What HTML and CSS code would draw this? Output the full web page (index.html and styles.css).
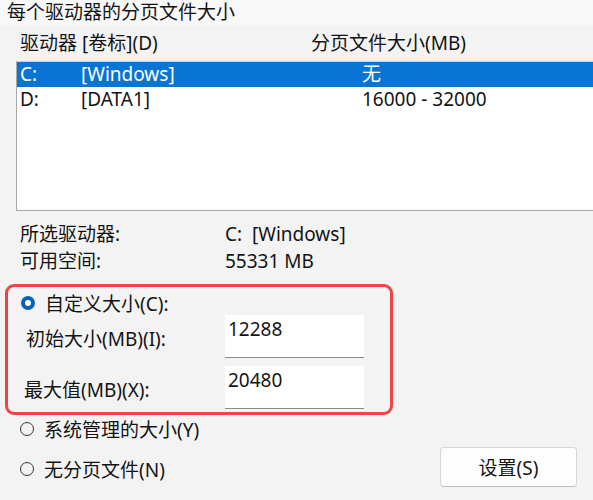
FILE: index.html
```html
<!DOCTYPE html>
<html lang="zh-CN">
<head>
<meta charset="utf-8">
<link rel="stylesheet" href="styles.css">
</head>
<body>
<div class="page">
  <div class="title">每个驱动器的分页文件大小</div>
  <div class="header">
    <span class="h1">驱动器 [卷标](D)</span>
    <span class="h2">分页文件大小(MB)</span>
  </div>
  <div class="list">
    <div class="row selected"><span class="c1">C:</span><span class="c2">[Windows]</span><span class="c3">无</span></div>
    <div class="row"><span class="c1">D:</span><span class="c2">[DATA1]</span><span class="c3">16000 - 32000</span></div>
  </div>
  <div class="info">
    <span>所选驱动器:</span><span>C:&nbsp; [Windows]</span>
    <span>可用空间:</span><span>55331 MB</span>
  </div>
  <div class="redbox">
    <div class="radio-row"><span class="radio checked"></span><span>自定义大小(C):</span></div>
    <div class="fields">
      <span class="flabel first">初始大小(MB)(I):</span><div class="input">12288</div>
      <span class="flabel">最大值(MB)(X):</span><div class="input">20480</div>
    </div>
  </div>
  <div class="bottom">
    <div class="radios">
      <div class="radio-row"><span class="radio"></span><span>系统管理的大小(Y)</span></div>
      <div class="radio-row"><span class="radio"></span><span>无分页文件(N)</span></div>
    </div>
    <div class="button">设置(S)</div>
  </div>
</div>
</body>
</html>
```
FILE: styles.css
```css
html, body {
  margin: 0;
  padding: 0;
  background: #f3f3f3;
}
body {
  font-family: "Noto Sans", "Noto Sans CJK SC", sans-serif;
  font-size: 19px;
  color: #141414;
  overflow: hidden;
  width: 593px;
  height: 500px;
}
.page {
  display: flex;
  flex-direction: column;
}
.title {
  height: 26px;
  line-height: 26px;
  padding-left: 7px;
  background: #f8f8f8;
  margin-top: -1px;
}
.header {
  display: flex;
  height: 36px;
  line-height: 36px;
  padding-left: 20px;
}
.h1 { width: 291px; }
.list {
  margin-left: 16px;
  height: 148px;
  background: #ffffff;
  border-top: 1px solid #d0d0d0;
  border-left: 1px solid #a8a8a8;
  border-bottom: 1px solid #a8a8a8;
  margin-right: -4px;
}
.row {
  display: flex;
  height: 25px;
  line-height: 25px;
  padding-left: 3px;
}
.row.selected {
  background: #0a74d4;
  color: #ffffff;
}
.c1 { width: 61px; }
.c2 { width: 281px; }
.info {
  display: grid;
  grid-template-columns: 205px auto;
  padding-left: 20px;
  margin-top: 10px;
  line-height: 27px;
}
.redbox {
  margin: 9px 0 0 5px;
  width: 382px;
  border: 3px solid #ef4444;
  border-radius: 9px;
  padding: 4px 0 3px 0;
  display: flex;
  flex-direction: column;
}
.radio-row {
  display: flex;
  align-items: center;
  gap: 10px;
  height: 24px;
  padding-left: 13px;
}
.radio {
  width: 13px;
  height: 13px;
  border-radius: 50%;
  border: 1px solid #333;
  box-sizing: border-box;
  background: transparent;
  flex: none;
}
.radio.checked {
  width: 14px;
  height: 14px;
  border: 4px solid #0a60b8;
  background: #ffffff;
}
.fields {
  display: grid;
  grid-template-columns: 201px 139px;
  row-gap: 8px;
  padding-left: 16px;
}
.flabel {
  display: flex;
  align-items: center;
  padding-top: 2px;
}
.flabel.first { padding-left: 2px; }
.input {
  height: 41px;
  background: #ffffff;
  border-bottom: 1px solid #8a8a8a;
  padding: 1px 0 0 3px;
  line-height: 26px;
}
.bottom {
  display: flex;
  justify-content: space-between;
  align-items: flex-start;
  margin-top: 2px;
}
.radios {
  display: flex;
  flex-direction: column;
  gap: 16px;
}
.radios .radio-row {
  padding-left: 20px;
}
.radios .radio {
  width: 14px;
  height: 14px;
}
.button {
  margin: 30px 16px 0 0;
  width: 137px;
  height: 40px;
  box-sizing: border-box;
  background: #fdfdfd;
  border: 1px solid #d6d6d6;
  border-bottom-color: #bdbdbd;
  border-radius: 4px;
  display: flex;
  align-items: center;
  justify-content: center;
}
```
